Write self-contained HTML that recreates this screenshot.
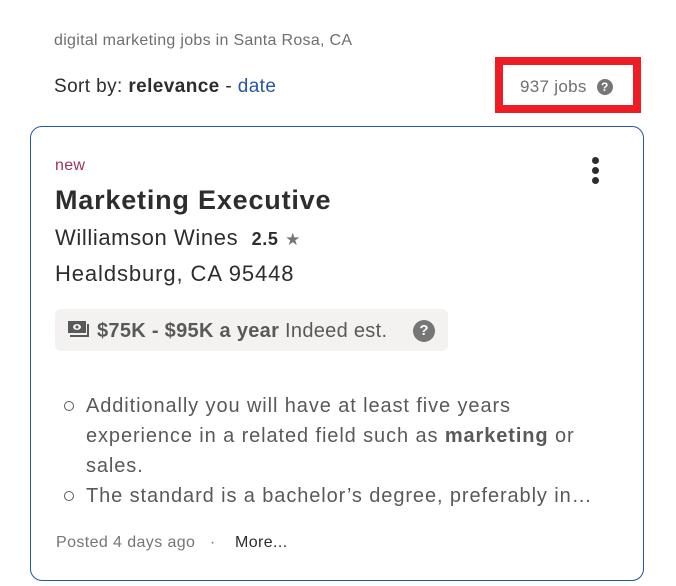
<!DOCTYPE html>
<html><head><meta charset="utf-8"><style>
*{margin:0;padding:0;box-sizing:border-box}
body{width:676px;height:586px;background:#fff;font-family:"Liberation Sans",sans-serif;color:#2d2d2d;position:relative;overflow:hidden}
.a{position:absolute;white-space:nowrap}
.q{display:inline-block;border-radius:50%;background:#767676;color:#fff;font-weight:bold;text-align:center;letter-spacing:0}
</style></head><body>
<div class="a" style="left:54px;top:32px;font-size:16px;color:#6f6f6f;letter-spacing:0.3px">digital marketing jobs in Santa Rosa, CA</div>
<div class="a" style="left:54px;top:76px;font-size:19px;color:#2d2d2d;letter-spacing:0.4px">Sort by: <b>relevance</b> - <span style="color:#2557a7">date</span></div>
<div class="a" style="left:495px;top:57px;width:146px;height:56px;border:8px solid #ee1c25"></div>
<div class="a" style="left:520px;top:77px;font-size:17px;color:#6f6f6f;letter-spacing:0.3px">937 jobs <span class="q" style="width:16px;height:16px;font-size:12px;line-height:16px;margin-left:5px;vertical-align:1px">?</span></div>
<div class="a" style="left:30px;top:126px;width:614px;height:455px;border:1px solid #2557a7;border-radius:12px"></div>
<div class="a" style="left:592px;top:157px;width:7px;height:7px;border-radius:50%;background:#2d2d2d;box-shadow:0 10px 0 #2d2d2d,0 20px 0 #2d2d2d"></div>
<div class="a" style="left:55px;top:157px;font-size:16px;color:#a2305e;letter-spacing:0.3px">new</div>
<div class="a" style="left:55px;top:185px;font-size:27px;font-weight:bold;letter-spacing:0.8px">Marketing Executive</div>
<div class="a" style="left:55px;top:225px;font-size:22px;letter-spacing:0.6px">Williamson Wines&nbsp; <b style="font-size:18px">2.5</b> <span style="color:#767676;font-size:17px">★</span></div>
<div class="a" style="left:55px;top:261px;font-size:22px;letter-spacing:0.9px">Healdsburg, CA 95448</div>
<div class="a" style="left:55px;top:309px;width:393px;height:42px;background:#f3f2f1;border-radius:6px"></div>
<svg class="a" style="left:67px;top:320px" width="24" height="20" viewBox="0 0 24 20"><rect x="1" y="1" width="18" height="12" fill="#595959"/><ellipse cx="10" cy="7" rx="4" ry="3" fill="#f3f2f1"/><circle cx="10" cy="7" r="1.5" fill="#595959"/><path d="M3 16H21V4" stroke="#595959" stroke-width="2" fill="none"/></svg>
<div class="a" style="left:97px;top:320px;font-size:20px;color:#595959;letter-spacing:0.3px"><b>$75K - $95K a year</b> Indeed est.</div>
<div class="a q" style="left:413px;top:320px;width:22px;height:22px;font-size:15px;line-height:22px">?</div>
<div class="a" style="left:86px;top:391px;font-size:20px;line-height:30px;color:#595959;white-space:normal;width:505px;letter-spacing:0.9px">Additionally you will have at least five years experience in a related field such as <b>marketing</b> or sales.</div>
<div class="a" style="left:86px;top:481px;font-size:20px;line-height:30px;color:#595959;letter-spacing:0.9px">The standard is a bachelor’s degree, preferably in…</div>
<div class="a" style="left:64px;top:401px;width:10px;height:10px;border:1.5px solid #595959;border-radius:50%"></div>
<div class="a" style="left:64px;top:491px;width:10px;height:10px;border:1.5px solid #595959;border-radius:50%"></div>
<div class="a" style="left:56px;top:534px;font-size:16px;color:#767676;letter-spacing:0.4px">Posted 4 days ago &nbsp;&nbsp;·&nbsp;&nbsp;&nbsp; <span style="color:#2d2d2d">More...</span></div>
</body></html>
